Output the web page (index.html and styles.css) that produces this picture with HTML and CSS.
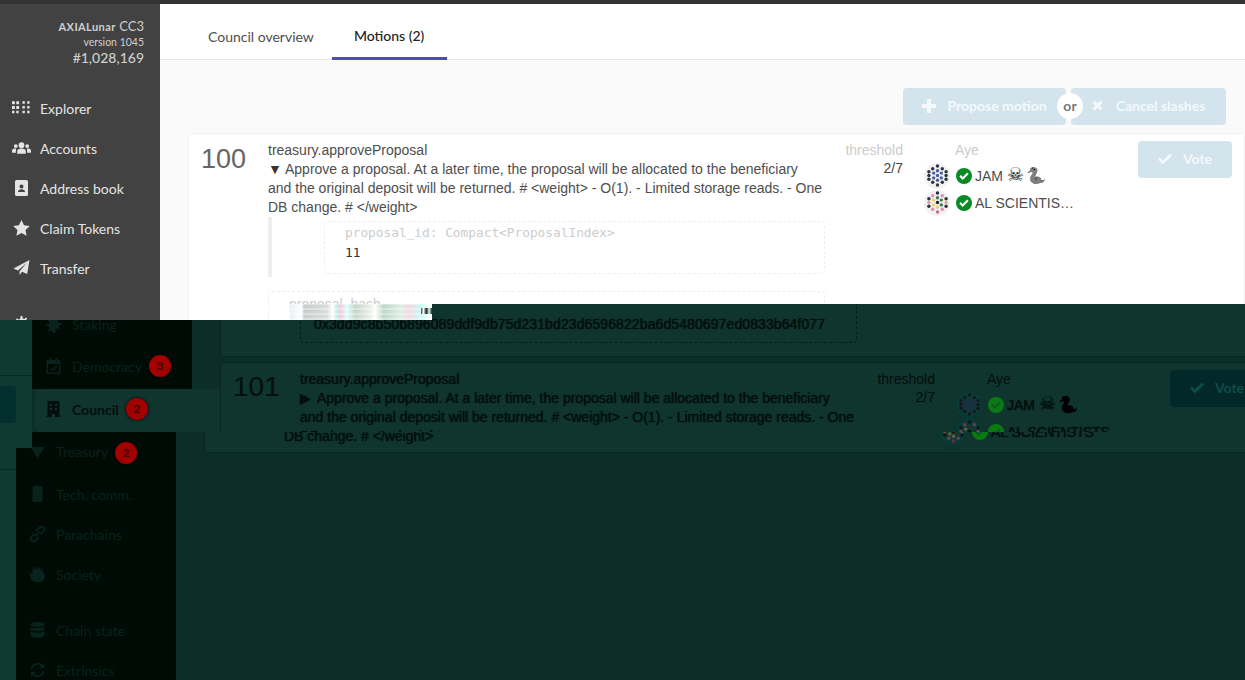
FILE: index.html
```html
<!DOCTYPE html>
<html lang="en">
<head>
    <meta charset="UTF-8">
    <meta name="viewport" content="width=device-width, initial-scale=1.0">
    <title>Council motions</title>
    <link rel="stylesheet" href="styles.css">
</head>
<body>
    <svg class="defs" width="0" height="0">
        <symbol id="i-grid" viewBox="0 0 20 16"><path d="M0 1h3v3H0zM4.500 1h3v3h-3zM0 6h3v3H0zM4.500 6h3v3h-3zM0 11h2.500v2.500H0zM4.500 11H7v2.500H4.500zM11 1h2.500v2.500H11zM16 1h2.500v2.500H16zM11 6h2.500v2.500H11zM16 6h2.500v2.500H16zM11 11h2.500v2.500H11zM16 11h2.500v2.500H16z"/></symbol>
        <symbol id="i-users" viewBox="0 0 20 16"><circle cx="10" cy="5" r="3"/><circle cx="4" cy="6" r="2"/><circle cx="16" cy="6" r="2"/><path d="M5.500 14v-2.500C5.500 9.500 7 8.500 10 8.500s4.500 1 4.500 3V14zM0 13v-2c0-1.500 1-2.500 2.500-2.500h2C3.800 9.400 4.200 11 4.200 13zM20 13v-2c0-1.500-1-2.500-2.500-2.500h-2c.7.900.3 2.500.3 4.500z"/></symbol>
        <symbol id="i-book" viewBox="0 0 16 16"><path fill-rule="evenodd" d="M3 0h10a1.500 1.500 0 0 1 1.500 1.500v13A1.500 1.500 0 0 1 13 16H3a1.500 1.500 0 0 1-1.500-1.500v-13A1.500 1.500 0 0 1 3 0zm5 4.500a2 2 0 1 0 0 4 2 2 0 0 0 0-4zM4.500 12h7c0-1.800-1.500-2.800-3.500-2.800S4.500 10.200 4.500 12z"/></symbol>
        <symbol id="i-star" viewBox="0 0 18 17"><path d="M9 0l2.700 5.600 6.100.8-4.500 4.300 1.100 6.100L9 13.900 3.600 16.800l1.100-6.100L.2 6.400l6.100-.8z"/></symbol>
        <symbol id="i-plane" viewBox="0 0 16 16"><path d="M16 0L13.700 14 8.500 11.800 6 15V11.500L13 3 4.500 10.500 0 8.500z"/></symbol>
        <symbol id="i-gear" viewBox="0 0 16 16"><path d="M7 0h2v2.200l1.800.7 1.500-1.500 1.400 1.400-1.500 1.500.7 1.800H16v2h-2.100l-.7 1.800 1.500 1.500-1.400 1.400-1.500-1.500-1.800.7V16H7v-2.100l-1.800-.7-1.500 1.500-1.400-1.400 1.500-1.500L3.100 9H1V7h2.100l.7-1.800-1.500-1.500 1.400-1.400 1.500 1.500L7 2.200z"/></symbol>
        <symbol id="i-calendar" viewBox="0 0 14 16"><path fill-rule="evenodd" d="M3 0h2v2h4V0h2v2h3v14H0V2h3zM1.500 6v8.500h11V6zM10 7.500l1 1-4.800 4.800L3.500 10.600l1-1 1.700 1.700z"/></symbol>
        <symbol id="i-building" viewBox="0 0 14 16"><path fill-rule="evenodd" d="M1 0h12v14.500h1V16H8.500v-3h-3v3H0v-1.500h1zM3.500 3v2h2V3zm5 0v2h2V3zm-5 4v2h2V7zm5 0v2h2V7z"/></symbol>
        <symbol id="i-phone" viewBox="0 0 12 16"><rect x="1" width="10" height="16" rx="1.500"/></symbol>
        <symbol id="i-link" viewBox="0 0 16 16"><path fill="none" stroke="currentColor" stroke-width="1.800" d="M6.500 5L10 1.500a2.800 2.800 0 0 1 4 4L11 8.500M9.500 11L6 14.500a2.800 2.800 0 0 1-4-4L5 7.500M5.500 10.500l5-5"/></symbol>
        <symbol id="i-hand" viewBox="0 0 16 16"><path d="M3 1l2 3 1-4 2 4 2-4 1 4 2-2 .5 5 1.500-1v4a5 5 0 0 1-5 6H6a5 5 0 0 1-5-5L0 6l3 2z"/></symbol>
        <symbol id="i-db" viewBox="0 0 14 16"><ellipse cx="7" cy="2.500" rx="7" ry="2.500"/><path d="M0 4.500c2 2 12 2 14 0v3c-2 2-12 2-14 0zM0 9c2 2 12 2 14 0v4.500c-1 3-13 3-14 0z"/></symbol>
        <symbol id="i-sync" viewBox="0 0 16 16"><path fill="none" stroke="currentColor" stroke-width="1.800" d="M2 7a6 6 0 0 1 11-2.500M14 9a6 6 0 0 1-11 2.500"/><path d="M14.500 1v5h-5zM1.500 15v-5h5z"/></symbol>
        <symbol id="i-funnel" viewBox="0 0 16 16"><path d="M1 3h14L8 14z"/></symbol>
        <symbol id="i-plus" viewBox="0 0 14 14"><path d="M5 0h4v5h5v4H9v5H5V9H0V5h5z"/></symbol>
        <symbol id="i-times" viewBox="0 0 12 12"><path d="M3 .5L6 3.500 9 .5 11.500 3 8.500 6l3 3L9 11.500l-3-3-3 3L.5 9l3-3-3-3z"/></symbol>
        <symbol id="i-check" viewBox="0 0 16 12"><path d="M5.500 12L0 6.500 2.200 4.300 5.500 7.600 13.500 0 16 2.200z"/></symbol>
        <symbol id="i-ok" viewBox="0 0 16 16"><circle cx="8" cy="8" r="8" fill="#0a8a24"/><path fill="#fff" d="M6.700 12L3.300 8.600l1.500-1.500 1.900 1.900 4.500-4.500 1.500 1.500z"/></symbol>
        <symbol id="i-ok-dim" viewBox="0 0 16 16"><circle cx="8" cy="8" r="8" fill="#0a7a12"/><path fill="#0e5a2a" d="M6.700 12L3.300 8.600l1.500-1.500 1.900 1.900 4.500-4.500 1.500 1.500z"/></symbol>
        <symbol id="a-jam" viewBox="0 0 22 24">
            <g fill="#2c3540">
                <circle cx="11" cy="2" r="1.800"/><circle cx="6" cy="5" r="1.800"/><circle cx="16" cy="5" r="1.800"/><circle cx="2" cy="8" r="1.800"/><circle cx="20" cy="8" r="1.800"/><circle cx="2" cy="12" r="1.800"/><circle cx="20" cy="12" r="1.800"/><circle cx="2" cy="16" r="1.800"/><circle cx="20" cy="16" r="1.800"/><circle cx="6" cy="19" r="1.800"/><circle cx="16" cy="19" r="1.800"/><circle cx="11" cy="22" r="1.800"/>
            </g>
            <g fill="#4c5f9c">
                <circle cx="11" cy="7" r="1.800"/><circle cx="7" cy="9.500" r="1.800"/><circle cx="15" cy="9.500" r="1.800"/><circle cx="7" cy="14.500" r="1.800"/><circle cx="15" cy="14.500" r="1.800"/><circle cx="11" cy="17" r="1.800"/><circle cx="11" cy="12" r="1.800"/>
            </g>
        </symbol>
        <symbol id="a-al" viewBox="0 0 22 24">
            <circle cx="11" cy="2" r="1.800" fill="#2b2b4a"/><circle cx="6" cy="5" r="1.800" fill="#d890b8"/><circle cx="16" cy="5" r="1.800" fill="#d890b8"/><circle cx="2" cy="8" r="1.800" fill="#2c3540"/><circle cx="20" cy="8" r="1.800" fill="#2c3540"/><circle cx="2" cy="12" r="1.800" fill="#e8a0a0"/><circle cx="20" cy="12" r="1.800" fill="#e8a0a0"/><circle cx="2" cy="16" r="1.800" fill="#2c3540"/><circle cx="20" cy="16" r="1.800" fill="#2c3540"/><circle cx="6" cy="19" r="1.800" fill="#d890b8"/><circle cx="16" cy="19" r="1.800" fill="#d890b8"/><circle cx="11" cy="22" r="1.800" fill="#d06a90"/>
            <circle cx="11" cy="7" r="1.800" fill="#3f7a50"/><circle cx="7" cy="9.500" r="1.800" fill="#e8d080"/><circle cx="15" cy="9.500" r="1.800" fill="#3f7a50"/><circle cx="7" cy="14.500" r="1.800" fill="#e8d080"/><circle cx="15" cy="14.500" r="1.800" fill="#3f7a50"/><circle cx="11" cy="17" r="1.800" fill="#e8d080"/><circle cx="11" cy="12" r="1.800" fill="#222"/>
        </symbol>
    </svg>

    <div class="top">
        <aside class="sidebar">
            <div class="chain">
                <div><span class="chain-name">AXIALunar</span> <span class="chain-cc">CC3</span></div>
                <div class="chain-version">version 1045</div>
                <div class="chain-block">#1,028,169</div>
            </div>
            <a class="nav-item"><svg class="nav-icon"><use href="#i-grid"/></svg>Explorer</a>
            <a class="nav-item"><svg class="nav-icon"><use href="#i-users"/></svg>Accounts</a>
            <a class="nav-item"><svg class="nav-icon"><use href="#i-book"/></svg>Address book</a>
            <a class="nav-item"><svg class="nav-icon"><use href="#i-star"/></svg>Claim Tokens</a>
            <a class="nav-item"><svg class="nav-icon"><use href="#i-plane"/></svg>Transfer</a>
            <a class="nav-item nav-next"><svg class="nav-icon"><use href="#i-gear"/></svg>Settings</a>
        </aside>

        <main class="main">
            <div class="tabs">
                <a class="tab">Council overview</a>
                <a class="tab tab-active">Motions (2)</a>
            </div>
            <div class="actions">
                <button class="btn btn-left"><svg class="btn-icon"><use href="#i-plus"/></svg>Propose motion</button>
                <span class="or">or</span>
                <button class="btn btn-right"><svg class="btn-icon btn-icon-sm"><use href="#i-times"/></svg>Cancel slashes</button>
            </div>
            <section class="card">
                <div class="card-num">100</div>
                <div class="call">
                    <div class="call-name">treasury.approveProposal</div>
                    <div class="call-doc"><span class="arrow">▼</span>Approve a proposal. At a later time, the proposal will be allocated to the beneficiary and the original deposit will be returned. # &lt;weight&gt; - O(1). - Limited storage reads. - One DB change. # &lt;/weight&gt;</div>
                    <div class="params">
                        <div class="param-box">
                            <div class="param-label">proposal_id: Compact&lt;ProposalIndex&gt;</div>
                            <div class="param-value">11</div>
                        </div>
                    </div>
                    <div class="hash-box">
                        <div class="hash-label">proposal_hash</div>
                    </div>
                </div>
                <div class="threshold"><div class="col-label">threshold</div><div class="threshold-val">2/7</div></div>
                <div class="votes">
                    <div class="aye-label col-label">Aye</div>
                    <div class="voter"><span class="avatar"><svg><use href="#a-jam"/></svg></span><svg class="ok"><use href="#i-ok"/></svg><span>JAM <span class="skull">☠</span><span class="snake">🐍</span></span></div>
                    <div class="voter"><span class="avatar"><svg><use href="#a-al"/></svg></span><svg class="ok"><use href="#i-ok"/></svg><span>AL SCIENTIS…</span></div>
                </div>
                <button class="btn vote"><svg class="btn-icon"><use href="#i-check"/></svg>Vote</button>
            </section>
            <div class="noise"></div>
        </main>
    </div>

    <div class="lower">
        <div class="slice slice-a">
            <div class="stub stub-a"><div class="stub-line"></div><div class="stub-btn"></div></div>
            <div class="slice-a-nav">
                <nav class="dark-nav dark-nav-a">
                    <a class="dark-item"><svg class="nav-icon"><use href="#i-gear"/></svg>Staking</a>
                    <a class="dark-item"><svg class="nav-icon"><use href="#i-calendar"/></svg>Democracy<span class="badge">3</span></a>
                </nav>
                <a class="council"><svg class="nav-icon"><use href="#i-building"/></svg>Council<span class="badge">2</span></a>
            </div>
            <div class="cards">
                <div class="hash-tail">
                    <div class="hash-tail-box">0x3dd9c8b50b896089ddf9db75d231bd23d6596822ba6d5480697ed0833b64f077</div>
                </div>
                <section class="card card-dim">
                    <div class="card-num">101</div>
                    <div class="call">
                        <div class="call-name">treasury.approveProposal</div>
                        <div class="call-doc"><span class="arrow">▶</span>Approve a proposal. At a later time, the proposal will be allocated to the beneficiary and the original deposit will be returned. # &lt;weight&gt; - O(1). - Limited storage reads. - One DB change. # &lt;/weight&gt;</div>
                    </div>
                    <div class="threshold"><div class="col-label">threshold</div><div class="threshold-val">2/7</div></div>
                    <div class="votes">
                        <div class="aye-label col-label">Aye</div>
                        <div class="voter"><span class="avatar"><svg><use href="#a-jam"/></svg></span><svg class="ok"><use href="#i-ok-dim"/></svg><span>JAM <span class="skull">☠</span><span class="snake">🐍</span></span></div>
                        <div class="voter"><span class="avatar"><svg><use href="#a-al"/></svg></span><svg class="ok"><use href="#i-ok-dim"/></svg><span>AL SCIENTISTS</span></div>
                    </div>
                    <button class="btn vote"><svg class="btn-icon"><use href="#i-check"/></svg>Vote</button>
                </section>
            </div>
        </div>

        <div class="slice slice-b">
            <div class="stub stub-b"><div class="stub-line"></div></div>
            <nav class="dark-nav dark-nav-b">
                <a class="dark-item dark-first"><svg class="nav-icon"><use href="#i-funnel"/></svg>Treasury<span class="badge">2</span></a>
                <a class="dark-item"><svg class="nav-icon"><use href="#i-phone"/></svg>Tech. comm.</a>
                <a class="dark-item"><svg class="nav-icon"><use href="#i-link"/></svg>Parachains</a>
                <a class="dark-item"><svg class="nav-icon"><use href="#i-hand"/></svg>Society</a>
                <a class="dark-item dark-gap"><svg class="nav-icon"><use href="#i-db"/></svg>Chain state</a>
                <a class="dark-item"><svg class="nav-icon"><use href="#i-sync"/></svg>Extrinsics</a>
            </nav>
            <div class="cards-tail">
                <section class="card card-dim">
                    <div class="card-num">101</div>
                    <div class="call">
                        <div class="call-name">treasury.approveProposal</div>
                        <div class="call-doc"><span class="arrow">▶</span>Approve a proposal. At a later time, the proposal will be allocated to the beneficiary and the original deposit will be returned. # &lt;weight&gt; - O(1). - Limited storage reads. - One DB change. # &lt;/weight&gt;</div>
                    </div>
                    <div class="threshold"><div class="col-label">threshold</div><div class="threshold-val">2/7</div></div>
                    <div class="votes">
                        <div class="aye-label col-label">Aye</div>
                        <div class="voter"><span class="avatar"><svg><use href="#a-jam"/></svg></span><svg class="ok"><use href="#i-ok-dim"/></svg><span>JAM <span class="skull">☠</span><span class="snake">🐍</span></span></div>
                        <div class="voter"><span class="avatar"><svg><use href="#a-al"/></svg></span><svg class="ok"><use href="#i-ok-dim"/></svg><span>AL SCIENTISTS</span></div>
                    </div>
                    <button class="btn vote"><svg class="btn-icon"><use href="#i-check"/></svg>Vote</button>
                </section>
            </div>
        </div>
    </div>
</body>
</html>
```

FILE: styles.css
```css
* {
    box-sizing: border-box;
}

body {
    margin: 0;
    height: 680px;
    overflow: hidden;
    background-color: #0c2e29;
    font-family: "Liberation Sans", Arial, sans-serif;
    font-size: 14px;
    color: #4e4e4e;
}

.defs {
    position: absolute;
}

/* upper part of the capture */
.top {
    display: flex;
    height: 304px;
    border-top: 4px solid #333;
}

.sidebar {
    position: relative;
    z-index: 2;
    flex: none;
    width: 160px;
    height: 316px;
    overflow: hidden;
    background-color: #424242;
    font-family: Lato, sans-serif;
    color: #e4e4e4;
}

.chain {
    height: 84px;
    padding: 14px 16px 0 0;
    text-align: right;
    color: #cfcfcf;
    line-height: 16px;
}

.chain-name {
    font-size: 11px;
    font-weight: 700;
    letter-spacing: 0.4px;
}

.chain-cc {
    font-size: 13px;
}

.chain-version {
    margin-top: -1px;
    font-size: 10.500px;
}

.chain-block {
    font-size: 14px;
    font-weight: 500;
}

.nav-item {
    display: flex;
    align-items: center;
    height: 40px;
    font-size: 14px;
}

.nav-next {
    margin-top: 16px;
}

.nav-icon {
    flex: none;
    width: 19px;
    height: 16px;
    margin: 0 9px 0 12px;
    fill: currentColor;
}

.main {
    position: relative;
    z-index: 2;
    flex: 1;
    height: 316px;
    overflow: hidden;
    background-color: #fafafa;
    clip-path: polygon(0 0, 100% 0, 100% 300px, 272px 300px, 272px 100%, 0 100%);
}

.tabs {
    display: flex;
    height: 56px;
    padding-left: 26px;
    background-color: #fff;
    border-bottom: 1px solid #e6e6e6;
    font-family: Lato, sans-serif;
}

.tab {
    height: 56px;
    padding: 23px 22px 0;
    color: #4e4e4e;
    line-height: 20px;
}

.tab-active {
    margin-left: -4px;
    padding: 22px 23px 0 22px;
    color: #222;
    font-weight: 500;
    border-bottom: 3px solid #4d4db3;
}

.actions {
    position: relative;
    display: flex;
    justify-content: flex-end;
    gap: 5px;
    height: 37px;
    margin: 28px 19px 8px 0;
}

.btn {
    display: flex;
    align-items: center;
    justify-content: center;
    height: 37px;
    padding: 0 0 2px;
    border: 0;
    border-radius: 4px;
    background-color: #d3e4ec;
    color: #f4f9fb;
    font-family: Lato, sans-serif;
    font-size: 14px;
    font-weight: 700;
}

.btn-left {
    width: 163px;
}

.btn-right {
    width: 155px;
}

.btn-icon {
    width: 14px;
    height: 14px;
    margin-right: 11px;
    fill: currentColor;
}

.btn-icon-sm {
    width: 11px;
    height: 11px;
    margin-right: 13px;
}

.or {
    position: absolute;
    top: 5px;
    right: 143px;
    width: 26px;
    height: 26px;
    border-radius: 50%;
    background-color: #fff;
    color: #777;
    font-family: Lato, sans-serif;
    font-weight: 700;
    line-height: 25px;
    text-align: center;
}

.card {
    display: flex;
    flex: none;
    width: 1057px;
    margin-left: 28px;
    background-color: #fff;
    border: 1px solid #f0f0f0;
    border-radius: 4px;
}

.card-num {
    flex: none;
    width: 79px;
    padding: 9px 0 0 12px;
    font-size: 27px;
    line-height: 32px;
    color: #666;
}

.call {
    flex: none;
    width: 557px;
    padding-top: 7px;
}

.call-name {
    line-height: 18px;
}

.call-doc {
    margin-top: 1px;
    line-height: 19px;
}

.arrow {
    display: inline-block;
    width: 17px;
    font-size: 14px;
    line-height: 1;
    color: #333;
}

.params {
    height: 60px;
    padding: 4px 0 0 52px;
    border-left: 4px solid #eee;
}

.param-box {
    height: 53px;
    padding: 1px 0 0 20px;
    border: 1px dashed #eee;
    border-radius: 4px;
    font-family: "DejaVu Sans Mono", monospace;
    font-size: 12.800px;
    line-height: 20px;
}

.param-label {
    color: #ccc;
}

.param-value {
    color: #333;
}

.hash-box {
    height: 60px;
    margin-top: 14px;
    padding: 4px 0 0 20px;
    border: 1px dashed #eee;
    border-radius: 4px;
}

.hash-label {
    color: #ccc;
}

.threshold {
    flex: none;
    width: 78px;
    padding-top: 7px;
    text-align: right;
}

.col-label {
    color: #ccc;
    line-height: 18px;
}

.threshold-val {
    line-height: 18px;
    color: #444;
}

.votes {
    flex: none;
    width: 235px;
    padding: 7px 0 0 21px;
}

.aye-label {
    margin: 0 0 3px 31px;
}

.voter {
    display: flex;
    align-items: center;
    height: 27px;
    white-space: nowrap;
}

.avatar {
    display: flex;
    align-items: center;
    justify-content: center;
    flex: none;
    width: 26px;
    height: 26px;
    margin-right: 6px;
    border-radius: 50%;
    background-color: #f2f2f2;
}

.avatar svg {
    width: 21px;
    height: 23px;
}

.ok {
    flex: none;
    width: 16px;
    height: 16px;
    margin-right: 3px;
}

.skull {
    font-family: "DejaVu Sans", sans-serif;
    font-size: 19px;
    line-height: 14px;
    color: #111;
}

.snake {
    margin-left: 2px;
    font-size: 16px;
    line-height: 14px;
    filter: grayscale(1) contrast(3) brightness(0.5);
}

.vote {
    flex: none;
    width: 94px;
    margin-top: 7px;
}

.noise {
    position: absolute;
    left: 130px;
    top: 300px;
    width: 142px;
    height: 16px;
    background:
        linear-gradient(90deg, transparent 92%, #222 92%, #fff 94%, #222 96%, #cfe 98%, #222 100%) 0 4px / 100% 6px no-repeat,
        repeating-linear-gradient(0deg, rgba(255, 255, 255, 0.35) 0 2px, transparent 2px 5px),
        linear-gradient(90deg, #e6f0f2 0, #fff 8%, #c9cdcc 10%, #d8dcdc 26%, #fff 30%, #bfeee8 33%, #f7c9e0 36%, #dff 40%, #c8d4ce 46%, #e8efe8 56%, #fff 60%, #bcd8c8 66%, #dfeee6 78%, #f5d8e4 84%, #c8fbf5 92%, #fff 100%);
}

/* lower part, darkened and shifted sideways */
.lower {
    color: #020f0c;
}

.slice {
    display: flex;
    overflow: hidden;
}

.slice-a {
    height: 128px;
}

.slice-b {
    height: 248px;
    background: linear-gradient(90deg, #0f3a33 176px, transparent 176px);
}

.stub {
    flex: none;
    background-color: #0f3a33;
}

.stub-a {
    width: 32px;
}

.stub-b {
    width: 16px;
}

.stub-line {
    height: 1px;
    background-color: #082a25;
}

.stub-a .stub-line {
    margin-top: 71px;
}

.stub-b .stub-line {
    margin-top: 37px;
}

.stub-btn {
    width: 16px;
    height: 37px;
    margin-top: 10px;
    border-radius: 0 4px 4px 0;
    background-color: #03302f;
}

.slice-a-nav {
    flex: none;
    width: 188px;
}

.dark-nav {
    width: 160px;
    background-color: #000b05;
    font-family: Lato, sans-serif;
    color: #08221d;
}

.dark-nav-a {
    height: 85px;
}

.dark-nav-a .dark-item:first-child {
    height: 41px;
}

.dark-nav-b {
    flex: none;
    height: 248px;
    clip-path: polygon(16px 0, 100% 0, 100% 100%, 0 100%, 0 16px, 16px 16px);
}

.dark-item {
    display: flex;
    align-items: center;
    height: 42px;
}

.dark-nav-b .dark-item {
    height: 40px;
}

.dark-nav-b .dark-first {
    height: 45px;
    margin-top: -3px;
}

.dark-nav-b .dark-gap {
    margin-top: 16px;
}

.dark-first .badge {
    margin-top: 3px;
}

.badge {
    display: block;
    width: 22px;
    height: 22px;
    margin-left: 7px;
    border-radius: 50%;
    background-color: #a30000;
    box-shadow: 0 0 3px #000;
    color: #3a0505;
    font-size: 12px;
    font-weight: 700;
    line-height: 22px;
    text-align: center;
}

.council {
    display: flex;
    align-items: center;
    width: 185px;
    height: 43px;
    margin-left: 3px;
    padding-bottom: 3px;
    border-radius: 6px 0 0 6px;
    background-color: #10342e;
    color: #020f0c;
    font-family: Lato, sans-serif;
    font-weight: 700;
}

.council .nav-icon {
    margin-left: 9px;
}

.cards {
    flex: none;
    width: 1057px;
}

.hash-tail {
    height: 53px;
    padding-left: 79px;
    background-color: #10342e;
    border-left: 1px solid #0a2722;
    border-bottom: 1px solid #0a2722;
}

.hash-tail-box {
    width: 557px;
    height: 39px;
    padding: 12px 0 0 13px;
    border: 1px dashed #06201b;
    border-top: 0;
    border-radius: 0 0 4px 4px;
    letter-spacing: 0.100px;
    line-height: 16px;
    text-shadow: 0 0 1px #020f0c;
}

.card-dim {
    margin: 5px 0 0;
    height: 91px;
    background-color: #10342e;
    border-color: #0a2722;
}

.card-dim .card-num,
.card-dim .col-label,
.card-dim .threshold-val {
    color: #020f0c;
}

.card-dim .card-num {
    padding-top: 8px;
    font-size: 28px;
}

.card-dim .call,
.card-dim .voter {
    text-shadow: 0 0 1px #020f0c;
}

.card-dim .arrow,
.card-dim .skull {
    color: #020f0c;
}

.card-dim .snake {
    filter: brightness(0);
}

.card-dim .avatar {
    background-color: #0b3a36;
    box-shadow: 0 0 4px #0b3a36;
}

.card-dim .avatar svg {
    filter: brightness(0.45);
}

.card-dim .vote {
    background-color: #02282a;
    color: #0d4f48;
}

.cards-tail {
    flex: none;
    width: 1057px;
    height: 248px;
    margin-left: 28px;
    overflow: hidden;
}

.cards-tail .card-dim {
    margin-top: -70px;
}
```
